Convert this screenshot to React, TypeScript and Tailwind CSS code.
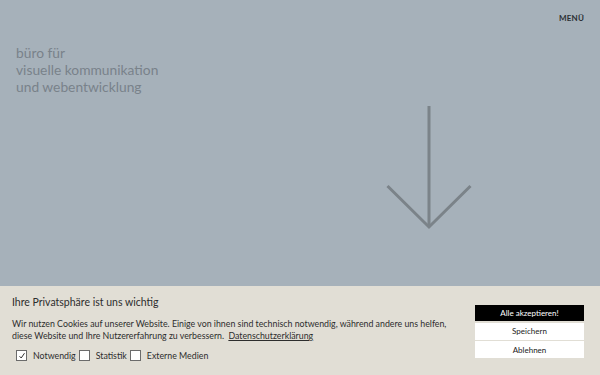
import { useState } from "react";

const ArrowDown = () => (
  <svg width="90" height="126" viewBox="0 0 90 126" fill="none">
    <path d="M43 0 V121" stroke="#7b8389" strokeWidth="3" />
    <path d="M1.5 80 L43 121 L84.5 80" stroke="#7b8389" strokeWidth="3" />
  </svg>
);

const Check = ({ checked, onClick }: { checked: boolean; onClick: () => void }) => (
  <button
    type="button"
    onClick={onClick}
    className="flex h-[11px] w-[11px] items-center justify-center border border-[#6b6b6b] bg-white"
  >
    {checked && (
      <svg width="8" height="8" viewBox="0 0 8 8" fill="none">
        <path d="M1.5 4.2 L3.2 6 L6.5 1.2" stroke="#333" strokeWidth="1" />
      </svg>
    )}
  </button>
);

const App = () => {
  const [stats, setStats] = useState(false);
  const [media, setMedia] = useState(false);

  return (
    <div
      className="flex h-[375px] w-full flex-col overflow-hidden bg-[#a6b1ba]"
      style={{ fontFamily: "Lato, 'Open Sans', sans-serif" }}
    >
      <div className="flex flex-1 flex-col">
        <div className="flex justify-end pr-[16px] pt-[12px]">
          <span className="text-[8px] font-bold tracking-[0.02em] text-[#2a2f33]">MENÜ</span>
        </div>
        <div className="flex pl-[16px] pt-[20px]">
          <h1 className="text-[13.8px] leading-[17px] text-[#79828a]">
            büro für
            <br />
            visuelle kommunikation
            <br />
            und webentwicklung
          </h1>
        </div>
        <div className="flex pl-[386px] pt-[11px]">
          <ArrowDown />
        </div>
      </div>

      <div className="flex h-[89px] items-start justify-between bg-[#e1ded5] pl-[12px] pr-[16px]">
        <div className="pt-[9px] text-[#2d2d2d]">
          <h2 className="text-[10.5px] leading-[14px]">Ihre Privatsphäre ist uns wichtig</h2>
          <p className="mt-[9px] text-[8.8px] leading-[12px]">
            Wir nutzen Cookies auf unserer Website. Einige von ihnen sind technisch notwendig, während andere uns helfen,
            <br />
            diese Website und Ihre Nutzererfahrung zu verbessern.{" "}
            <a className="ml-[2px] underline">Datenschutzerklärung</a>
          </p>
          <div className="mt-[7px] flex items-center pl-[4px] text-[8.8px]">
            <Check checked onClick={() => {}} />
            <span className="ml-[6px] mr-[3px]">Notwendig</span>
            <Check checked={stats} onClick={() => setStats(!stats)} />
            <span className="ml-[6px] mr-[3px]">Statistik</span>
            <Check checked={media} onClick={() => setMedia(!media)} />
            <span className="ml-[6px]">Externe Medien</span>
          </div>
        </div>
        <div className="flex w-[109px] flex-col gap-[1.5px] pt-[19px] text-[8px]">
          <button className="h-[16px] bg-black text-white">Alle akzeptieren!</button>
          <button className="h-[17px] bg-white text-[#222]">Speichern</button>
          <button className="h-[17px] bg-white text-[#222]">Ablehnen</button>
        </div>
      </div>
    </div>
  );
};

export default App;
